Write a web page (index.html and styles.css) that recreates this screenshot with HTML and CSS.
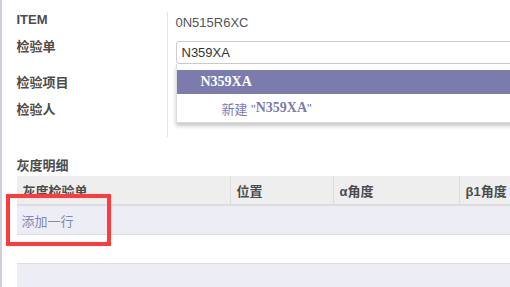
FILE: index.html
```html
<!DOCTYPE html>
<html lang="zh">
<head>
<meta charset="utf-8">
<link rel="stylesheet" href="styles.css">
</head>
<body>
<div class="sheet">
  <div class="form">
    <div class="labels">
      <div class="label l-item">ITEM</div>
      <div class="label l-order">检验单</div>
      <div class="label l-proj">检验项目</div>
      <div class="label l-person">检验人</div>
    </div>
    <div class="fields">
      <div class="value">0N515R6XC</div>
      <div class="input-wrap">
        <div class="input">N359XA</div>
        <div class="dropdown">
          <div class="opt active"><span class="serif">N359XA</span></div>
          <div class="opt create">新建 "<span class="serif">N359XA</span>"</div>
        </div>
      </div>
    </div>
  </div>

  <div class="section-title">灰度明细</div>
  <div class="grid-wrap">
    <div class="table">
      <div class="thead">
        <div class="th c1">灰度检验单</div>
        <div class="th c2">位置</div>
        <div class="th c3">α角度</div>
        <div class="th c4">β1角度</div>
      </div>
      <div class="row add-row"><span class="add-link">添加一行</span></div>
      <div class="row empty-row"></div>
      <div class="tfoot"></div>
    </div>
  </div>
</div>
<div class="highlight"></div>
</body>
</html>
```

FILE: styles.css
```css
html, body {
  margin: 0;
  padding: 0;
  background: #fff;
  overflow: hidden;
  width: 510px;
  height: 287px;
}
body {
  position: relative;
  font-family: "Liberation Sans", "Noto Sans CJK SC", sans-serif;
  font-size: 13px;
  color: #4c4c4c;
}
.sheet {
  border-left: 2.5px solid #cfcde0;
  padding-left: 14.5px;
  height: 287px;
  box-sizing: border-box;
  overflow: hidden;
}
.form {
  display: flex;
  margin-top: 12px;
  height: 125px;
}
.labels {
  width: 150px;
  flex-shrink: 0;
  border-right: 1px solid #e3e3e3;
  display: flex;
  flex-direction: column;
}
.label {
  font-weight: bold;
  line-height: 16px;
  color: #4c4c4c;
}
.l-order { margin-top: 11px; }
.l-proj { margin-top: 20px; }
.l-person { margin-top: 11px; }
.fields {
  padding-left: 8px;
  flex: 1;
  min-width: 0;
  overflow: hidden;
  display: flex;
  flex-direction: column;
}
.value {
  margin-top: 3px;
  line-height: 16px;
  color: #555;
}
.input-wrap {
  position: relative;
  margin-top: 10px;
  margin-right: -20px;
}
.input {
  height: 21px;
  line-height: 21px;
  border: 1px solid #cccccc;
  border-radius: 3px;
  padding-left: 5px;
  color: #333;
}
.dropdown {
  position: absolute;
  top: 23px;
  left: 0;
  right: 0;
  padding-top: 6px;
  background: #fff;
  border: 1px solid #dcdcdc;
  border-top: none;
  box-shadow: 0 3px 4px rgba(0, 0, 0, 0.22);
}
.opt {
  display: flex;
  align-items: center;
}
.opt.active {
  height: 24px;
  background: #7c7bad;
  color: #fff;
  padding-left: 24px;
}
.opt.create {
  height: 28px;
  color: #7c7bad;
  padding-left: 45px;
  white-space: pre;
}
.serif {
  font-family: "Liberation Serif", "DejaVu Serif", serif;
  font-weight: bold;
  font-size: 14px;
}
.section-title {
  margin-top: 21px;
  line-height: 16px;
  font-weight: bold;
  color: #4c4c4c;
}
.grid-wrap {
  margin-top: 2px;
  overflow: hidden;
}
.table {
  margin-right: -100px;
}
.thead {
  display: grid;
  grid-template-columns: 213px 103px 126px 1fr;
  height: 28px;
  background: #eeeeee;
  border-bottom: 2px solid #dddddd;
}
.th {
  display: flex;
  align-items: center;
  padding-left: 6px;
  font-weight: bold;
  color: #4c4c4c;
  border-left: 1px solid #dddddd;
}
.th.c1 { border-left: none; }
.row {
  height: 28px;
  border-bottom: 1px solid #dedede;
  display: flex;
  align-items: center;
}
.add-row {
  background: #ededf6;
}
.add-link {
  padding-left: 5px;
  color: #8786b8;
}
.empty-row {
  background: #fff;
}
.tfoot {
  height: 30px;
  background: #ededf6;
}
.highlight {
  position: absolute;
  left: 6px;
  top: 194px;
  width: 97px;
  height: 44px;
  border: 4px solid #ff3b3b;
}
```
